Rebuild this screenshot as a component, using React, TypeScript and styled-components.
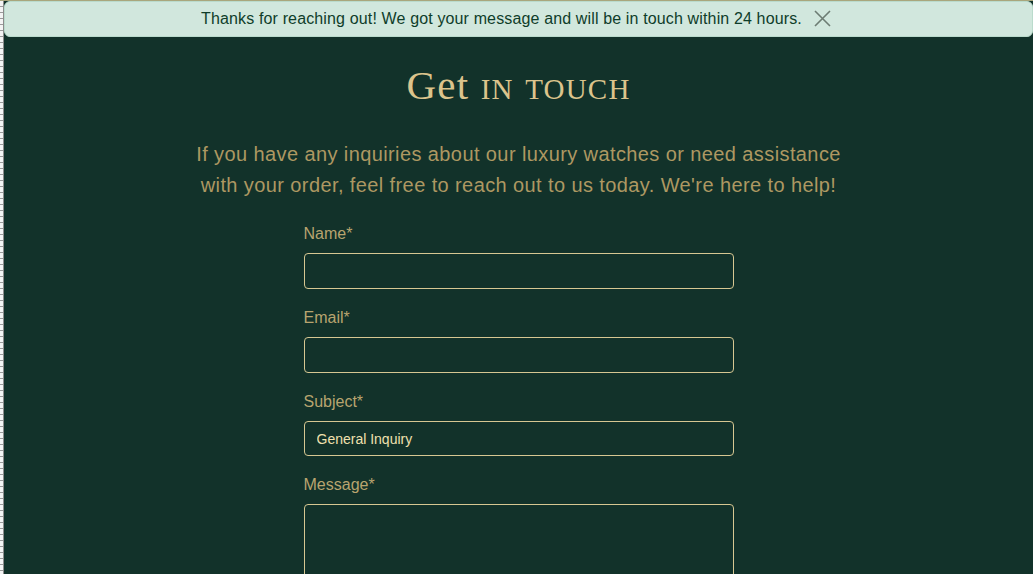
import React from "react";
import styled, { createGlobalStyle } from "styled-components";

const GlobalStyle = createGlobalStyle`
  html, body {
    margin: 0;
    padding: 0;
    background: #12322a;
  }
  * { box-sizing: border-box; }
`;

const Page = styled.div`
  display: flex;
  min-height: 574px;
  border-top: 1px solid #a9a67c;
`;

const Ruler = styled.div`
  width: 4px;
  flex: none;
  background:
    linear-gradient(to right, #f4f4f4 0 3px, #8c8c8c 3px 4px),
    #f4f4f4;
  position: relative;
  &::after {
    content: "";
    position: absolute;
    inset: 0 1px 0 0;
    background: repeating-linear-gradient(
      to bottom,
      transparent 0 5px,
      #9a9a9a 5px 6px
    );
  }
`;

const Main = styled.main`
  flex: 1;
  display: flex;
  flex-direction: column;
  align-items: center;
  background: #12322a;
`;

const Banner = styled.div`
  align-self: stretch;
  height: 36px;
  display: flex;
  align-items: center;
  justify-content: center;
  gap: 12px;
  padding-right: 4px;
  background: #d1e7dd;
  border: 1px solid #badbcc;
  border-radius: 6px;
  color: #0f3d2a;
  font-family: "Liberation Sans", Arial, sans-serif;
  font-size: 16px;
  letter-spacing: 0.14px;
`;

const CloseButton = styled.button`
  display: flex;
  align-items: center;
  justify-content: center;
  width: 18px;
  height: 18px;
  padding: 0;
  border: 0;
  background: transparent;
  cursor: pointer;
  margin-top: -2px;
`;

const Title = styled.h1`
  margin: 24px 0 0;
  font-family: "Liberation Serif", "Times New Roman", serif;
  font-weight: 400;
  font-size: 41px;
  line-height: 48px;
  color: #dcc48c;
  letter-spacing: 1.2px;
`;

const SmallCaps = styled.span`
  font-variant: small-caps;
`;

const Intro = styled.p`
  margin: 30px 0 0;
  max-width: 660px;
  text-align: center;
  font-family: "Liberation Sans", Arial, sans-serif;
  font-size: 20px;
  line-height: 31px;
  letter-spacing: 0.4px;
  color: #ad9862;
`;

const Form = styled.form`
  width: 430px;
  margin-top: 24px;
  display: flex;
  flex-direction: column;
  gap: 20px;
`;

const Field = styled.div`
  display: flex;
  flex-direction: column;
  gap: 10px;
`;

const Label = styled.label`
  font-family: "Liberation Sans", Arial, sans-serif;
  font-size: 16px;
  line-height: 18px;
  color: #b8a46f;
`;

const controlStyles = `
  width: 100%;
  background: transparent;
  border: 1px solid #d6c792;
  border-radius: 4px;
  font-family: "Liberation Sans", Arial, sans-serif;
  font-size: 14px;
  color: #f0e0ae;
  outline: none;
`;

const Input = styled.input`
  ${controlStyles}
  height: 36px;
  padding: 0 12px;
`;

const Select = styled.select`
  ${controlStyles}
  height: 35px;
  padding: 0 12px;
  font-weight: 500;
  appearance: none;
  -webkit-appearance: none;
  option {
    color: #000;
  }
`;

const TextArea = styled.textarea`
  ${controlStyles}
  height: 120px;
  padding: 8px 12px;
  resize: none;
`;

export default function App() {
  return (
    <>
      <GlobalStyle />
      <Page>
        <Ruler />
        <Main>
          <Banner role="status">
            <span>
              Thanks for reaching out! We got your message and will be in touch
              within 24 hours.
            </span>
            <CloseButton type="button" aria-label="Close">
              <svg width="17" height="17" viewBox="0 0 17 17">
                <path
                  d="M1 1 L16 16 M16 1 L1 16"
                  stroke="#6d7c73"
                  strokeWidth="1.6"
                  fill="none"
                />
              </svg>
            </CloseButton>
          </Banner>
          <Title>
            Get <SmallCaps>in touch</SmallCaps>
          </Title>
          <Intro>
            If you have any inquiries about our luxury watches or need
            assistance with your order, feel free to reach out to us today.
            We're here to help!
          </Intro>
          <Form onSubmit={(e) => e.preventDefault()}>
            <Field>
              <Label htmlFor="name">Name*</Label>
              <Input id="name" type="text" />
            </Field>
            <Field>
              <Label htmlFor="email">Email*</Label>
              <Input id="email" type="email" />
            </Field>
            <Field>
              <Label htmlFor="subject">Subject*</Label>
              <Select id="subject" defaultValue="General Inquiry">
                <option>General Inquiry</option>
                <option>Order Support</option>
                <option>Repairs &amp; Servicing</option>
              </Select>
            </Field>
            <Field>
              <Label htmlFor="message">Message*</Label>
              <TextArea id="message" />
            </Field>
          </Form>
        </Main>
      </Page>
    </>
  );
}
